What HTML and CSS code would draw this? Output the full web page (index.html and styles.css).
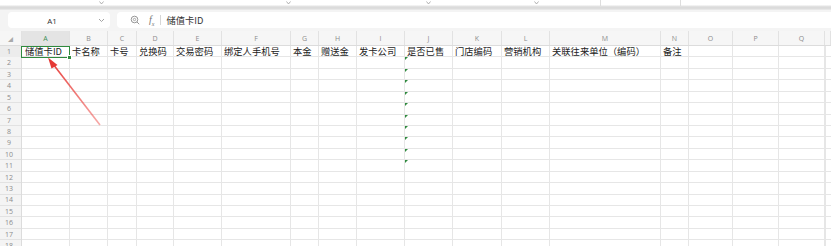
FILE: index.html
```html
<!DOCTYPE html>
<html lang="zh-CN">

<head>
    <meta charset="UTF-8">
    <title>储值卡导入模板</title>
    <link rel="stylesheet" href="styles.css">
</head>

<body>
    <div class="toolbar-edge">
        <svg class="tick t1" width="5" height="4" viewBox="0 0 5 4"><path d="M0.5 0.5 L2.5 3 L4.5 0.5" fill="none" stroke="#a0a0a0" stroke-width="0.8"/></svg>
        <svg class="tick t2" width="5" height="4" viewBox="0 0 5 4"><path d="M0.5 0.5 L2.5 3 L4.5 0.5" fill="none" stroke="#a0a0a0" stroke-width="0.8"/></svg>
        <svg class="tick t3" width="5" height="4" viewBox="0 0 5 4"><path d="M0.5 0.5 L2.5 3 L4.5 0.5" fill="none" stroke="#a0a0a0" stroke-width="0.8"/></svg>
        <svg class="tick t4" width="5" height="4" viewBox="0 0 5 4"><path d="M0.5 0.5 L2.5 3 L4.5 0.5" fill="none" stroke="#a0a0a0" stroke-width="0.8"/></svg>
        <span class="vline v1"></span>
        <span class="vline v2"></span>
    </div>

    <div class="formula-bar">
        <div class="name-box">
            <span class="ref">A1</span>
            <svg class="chevron" width="7" height="5" viewBox="0 0 7 5"><path d="M1 1 L3.5 3.5 L6 1" fill="none" stroke="#9a9a9a" stroke-width="0.9"/></svg>
        </div>
        <div class="formula-box">
            <svg class="zoom-icon" width="10" height="10" viewBox="0 0 10 10">
                <circle cx="4.5" cy="4.5" r="3.3" fill="none" stroke="#8a8a8a" stroke-width="0.9"/>
                <circle cx="4.5" cy="4.5" r="1.2" fill="none" stroke="#8a8a8a" stroke-width="0.7"/>
                <path d="M7 7 L9.2 9.2" stroke="#8a8a8a" stroke-width="0.9"/>
            </svg>
            <span class="fx">f<sub>x</sub></span>
            <span class="sep"></span>
            <span class="content">储值卡ID</span>
        </div>
    </div>

    <div class="sheet">
        <div class="col-head">
            <div class="corner">◢</div>
            <div class="h active" style="width:48px">A</div>
            <div class="h" style="width:38px">B</div>
            <div class="h" style="width:29px">C</div>
            <div class="h" style="width:37px">D</div>
            <div class="h" style="width:48px">E</div>
            <div class="h" style="width:69px">F</div>
            <div class="h" style="width:28px">G</div>
            <div class="h" style="width:38px">H</div>
            <div class="h" style="width:48px">I</div>
            <div class="h" style="width:48px">J</div>
            <div class="h" style="width:49px">K</div>
            <div class="h" style="width:48px">L</div>
            <div class="h" style="width:111px">M</div>
            <div class="h" style="width:28px">N</div>
            <div class="h" style="width:44px">O</div>
            <div class="h" style="width:46px">P</div>
            <div class="h" style="width:46px">Q</div>
            <div class="h rest"></div>
        </div>

        <div class="body">
            <div class="row-nums">
                <div class="n active">1</div>
                <div class="n">2</div>
                <div class="n">3</div>
                <div class="n">4</div>
                <div class="n">5</div>
                <div class="n">6</div>
                <div class="n">7</div>
                <div class="n">8</div>
                <div class="n">9</div>
                <div class="n">10</div>
                <div class="n">11</div>
                <div class="n">12</div>
                <div class="n">13</div>
                <div class="n">14</div>
                <div class="n">15</div>
                <div class="n">16</div>
                <div class="n">17</div>
                <div class="n">18</div>
            </div>
            <div class="col" style="width:48px"><div class="cell selected">储值卡ID<i class="handle"></i></div></div>
            <div class="col" style="width:38px"><div class="cell">卡名称</div></div>
            <div class="col" style="width:29px"><div class="cell">卡号</div></div>
            <div class="col" style="width:37px"><div class="cell">兑换码</div></div>
            <div class="col" style="width:48px"><div class="cell">交易密码</div></div>
            <div class="col" style="width:69px"><div class="cell">绑定人手机号</div></div>
            <div class="col" style="width:28px"><div class="cell">本金</div></div>
            <div class="col" style="width:38px"><div class="cell">赠送金</div></div>
            <div class="col" style="width:48px"><div class="cell">发卡公司</div></div>
            <div class="col" style="width:48px">
                <div class="cell">是否已售</div>
                <div class="cell flag"></div>
                <div class="cell flag"></div>
                <div class="cell flag"></div>
                <div class="cell flag"></div>
                <div class="cell flag"></div>
                <div class="cell flag"></div>
                <div class="cell flag"></div>
                <div class="cell flag"></div>
                <div class="cell flag"></div>
                <div class="cell flag"></div>
            </div>
            <div class="col" style="width:49px"><div class="cell">门店编码</div></div>
            <div class="col" style="width:48px"><div class="cell">营销机构</div></div>
            <div class="col" style="width:111px"><div class="cell">关联往来单位（编码）</div></div>
            <div class="col" style="width:28px"><div class="cell">备注</div></div>
            <div class="col" style="width:44px"></div>
            <div class="col" style="width:46px"></div>
            <div class="col" style="width:46px"></div>
            <div class="col rest"></div>
        </div>

        <svg class="arrow" width="120" height="90" viewBox="0 0 120 90">
            <defs>
                <linearGradient id="fade" x1="100" y1="125" x2="48" y2="58" gradientUnits="userSpaceOnUse">
                    <stop offset="0" stop-color="#ef5350" stop-opacity="0.5"/>
                    <stop offset="1" stop-color="#e53935"/>
                </linearGradient>
            </defs>
            <g transform="translate(0,-46)">
                <path d="M100 125 L53 64" stroke="url(#fade)" stroke-width="1.6" fill="none"/>
                <path d="M48 57.5 L57.5 65 L51.5 68.5 Z" fill="#e53935"/>
            </g>
        </svg>
    </div>
</body>

</html>
```

FILE: styles.css
```css
body {
    margin: 0;
    width: 831px;
    height: 246px;
    overflow: hidden;
    background: #fff;
    font-family: "Noto Sans CJK SC", "Noto Sans", sans-serif;
    color: #222;
}

/* strip left from the ribbon above */
.toolbar-edge {
    position: relative;
    height: 10px;
    background: linear-gradient(to bottom, #fff 0, #fff 5px, #e4e4e4 6px, #d8d8d8 8px, #ececec 10px);
}

.tick {
    position: absolute;
    top: 1px;
}

.t1 { left: 99px; }
.t2 { left: 286px; }
.t3 { left: 426px; }
.t4 { left: 534px; }

.vline {
    position: absolute;
    top: 0;
    width: 1px;
    height: 6px;
    background: #dedede;
}

.v1 { left: 600px; }
.v2 { left: 680px; }

.formula-bar {
    display: flex;
    gap: 7px;
    height: 21px;
    padding: 2px 0 0 8px;
    box-sizing: border-box;
    background: #f4f4f4;
}

.name-box,
.formula-box {
    height: 16px;
    background: #fff;
    border-radius: 4px;
    display: flex;
    align-items: center;
}

.name-box {
    width: 102px;
    position: relative;
    justify-content: center;
}

.ref {
    font-family: "Open Sans", sans-serif;
    font-size: 8px;
    color: #333;
    margin-left: -14px;
}

.chevron {
    position: absolute;
    right: 5px;
    top: 6px;
}

.formula-box {
    flex: 1;
    padding-left: 13px;
    border-radius: 4px 0 0 4px;
}

.fx {
    font-family: "Liberation Serif", serif;
    font-style: italic;
    font-size: 10px;
    color: #777;
    margin-left: 9px;
}

.fx sub {
    font-size: 6px;
}

.sep {
    width: 1px;
    height: 10px;
    background: #d6d6d6;
    margin: 0 5px 0 6px;
}

.content {
    font-size: 9.3px;
    color: #333;
}

.sheet {
    position: relative;
}

.col-head {
    display: flex;
    height: 15px;
    background: #f6f6f6;
    border-bottom: 1px solid #dcdcdc;
    box-sizing: border-box;
}

.corner {
    width: 22px;
    flex: none;
    font-size: 5px;
    color: #aaa;
    display: flex;
    align-items: center;
    padding-left: 8px;
    box-sizing: border-box;
    border-right: 1px solid #e2e2e2;
}

.h {
    flex: none;
    box-sizing: border-box;
    border-right: 1px solid #e2e2e2;
    font-family: "Open Sans", sans-serif;
    font-size: 7px;
    color: #8c8c8c;
    text-align: center;
    line-height: 15px;
}

.h.active {
    background: #e4e4e4;
    color: #3f8f5a;
}

.rest {
    flex: 1;
}

.body {
    display: flex;
    height: 200px;
    overflow: hidden;
    background: repeating-linear-gradient(to bottom, transparent 0, transparent 10.43px, #e6e6e6 10.43px, #e6e6e6 11.43px);
}

.row-nums {
    width: 22px;
    flex: none;
    background: repeating-linear-gradient(to bottom, #f4f4f4 0, #f4f4f4 10.43px, #e2e2e2 10.43px, #e2e2e2 11.43px);
    border-right: 1px solid #dcdcdc;
    box-sizing: border-box;
}

.n {
    height: 11.43px;
    font-family: "Open Sans", sans-serif;
    font-size: 7px;
    color: #8c8c8c;
    text-align: center;
    line-height: 11px;
    padding-right: 3px;
}

.n.active {
    background: #ececec;
}

.col {
    flex: none;
    box-sizing: border-box;
    border-right: 1px solid #e6e6e6;
}

.cell {
    height: 11.43px;
    font-size: 9.3px;
    line-height: 11.43px;
    padding-left: 2px;
    white-space: nowrap;
    position: relative;
}

.cell.selected {
    margin-left: -1px;
    margin-right: -1px;
    border: 1.5px solid #2f8a3e;
    box-sizing: border-box;
    height: 12px;
    line-height: 9px;
    padding-left: 3px;
}

.handle {
    position: absolute;
    right: -3px;
    bottom: -3px;
    width: 3px;
    height: 3px;
    background: #2f8a3e;
    border: 1px solid #fff;
}

.flag::before {
    content: "";
    position: absolute;
    left: 0;
    top: 0;
    border-top: 3px solid #2f8a3e;
    border-right: 3px solid transparent;
}

.arrow {
    position: absolute;
    left: 0;
    top: 15px;
}
```
